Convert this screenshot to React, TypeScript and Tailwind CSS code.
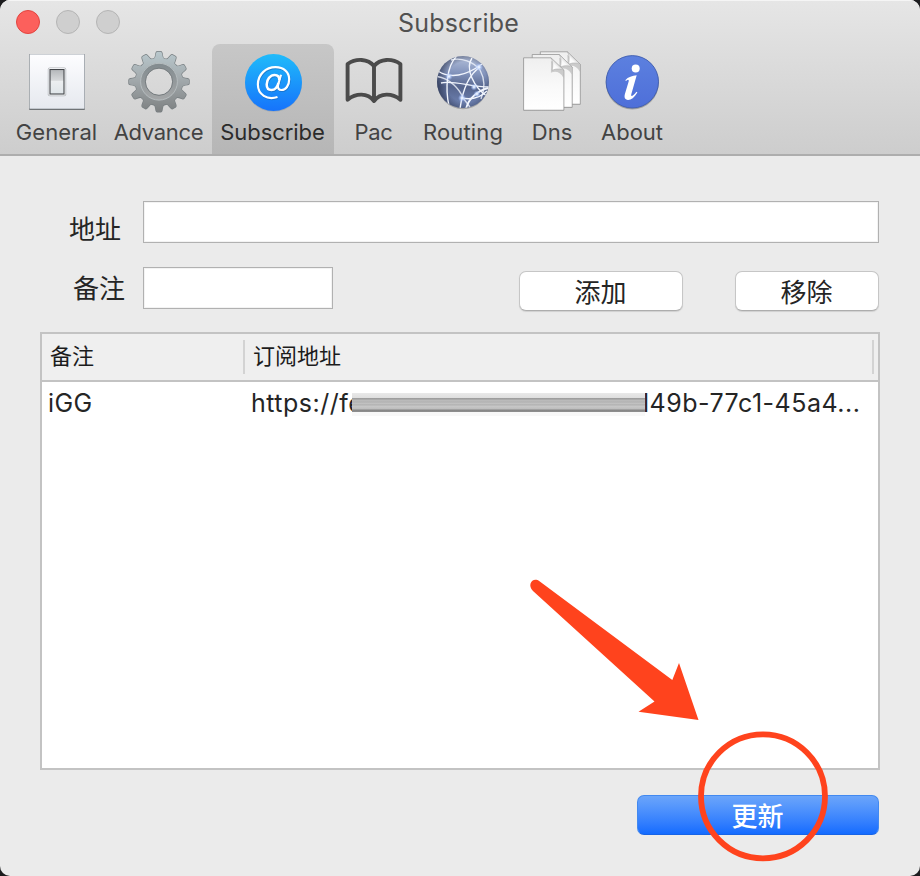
import React from "react";

const latin = "font-['Inter','Noto_Sans_CJK_SC',sans-serif]";

function GeneralIcon() {
  return (
    <svg viewBox="21 48 72 68" className="h-[68px] w-[72px]">
      <defs>
        <linearGradient id="plate" x1="0" y1="0" x2="0" y2="1">
          <stop offset="0" stopColor="#fdfdff" />
          <stop offset="1" stopColor="#e6e9ef" />
        </linearGradient>
        <linearGradient id="rocker" x1="0" y1="0" x2="0" y2="1">
          <stop offset="0" stopColor="#b4b7ba" />
          <stop offset="0.44" stopColor="#d6d8da" />
          <stop offset="0.48" stopColor="#eceef0" />
          <stop offset="1" stopColor="#dfe5e9" />
        </linearGradient>
      </defs>
      <rect x="29" y="54" width="56" height="56" rx="1" fill="#6f7376" />
      <rect x="29.2" y="54" width="55.6" height="55" rx="1" fill="#b9bec4" />
      <rect x="30" y="54.7" width="54" height="53.5" fill="url(#plate)" />
      <rect x="47.8" y="67.5" width="18.4" height="28.8" rx="2" fill="#b1b4b8" />
      <rect x="48.5" y="68" width="17" height="27.4" rx="1.5" fill="#f8f9fb" />
      <rect x="50" y="69.5" width="14" height="24.5" fill="url(#rocker)" stroke="#43464a" strokeWidth="1.1" />
    </svg>
  );
}

const teeth = [0, 30, 60, 90, 120, 150, 180, 210, 240, 270, 300, 330];

function GearIcon() {
  return (
    <svg viewBox="123 48 72 68" className="h-[68px] w-[72px]">
      <defs>
        <linearGradient id="gear" gradientUnits="userSpaceOnUse" x1="0" y1="51" x2="0" y2="113">
          <stop offset="0" stopColor="#b9c8cd" />
          <stop offset="0.45" stopColor="#a3aaad" />
          <stop offset="1" stopColor="#7c7f80" />
        </linearGradient>
        <linearGradient id="gearRing" gradientUnits="userSpaceOnUse" x1="0" y1="63" x2="0" y2="101">
          <stop offset="0" stopColor="#818a8e" />
          <stop offset="1" stopColor="#a6a8a9" />
        </linearGradient>
        <mask id="gearHole">
          <rect x="123" y="48" width="72" height="68" fill="#fff" />
          <circle cx="159" cy="81.700" r="13.6" fill="#000" />
        </mask>
        <mask id="gearTeeth">
          <g fill="#fff">
            <circle cx="159" cy="81.700" r="23.700" />
            {teeth.map((a) => (
              <path key={a} transform={`rotate(${a} 159 81.7)`} d="M153.500 60 Q155.500 58 156 53.500 Q156.300 51.700 157.400 51.700 H160.600 Q161.700 51.700 162 53.500 Q162.500 58 164.500 60Z" />
            ))}
          </g>
          <circle cx="159" cy="81.700" r="13.6" fill="#000" />
        </mask>
      </defs>
      <g mask="url(#gearHole)">
        <g fill="#787f82">
          {teeth.map((a) => (
            <path key={a} transform={`rotate(${a} 159 81.7)`} d="M152.900 60 Q154.900 58 155.400 53 Q155.800 51 157.200 51 H160.800 Q162.200 51 162.600 53 Q163.100 58 165.100 60Z" />
          ))}
          <circle cx="159" cy="81.700" r="24.300" />
        </g>
      </g>
      <rect x="123" y="48" width="72" height="68" fill="url(#gear)" mask="url(#gearTeeth)" />
      <circle cx="159" cy="81.700" r="16" fill="none" stroke="url(#gearRing)" strokeWidth="5" />
      <circle cx="159" cy="81.700" r="18.4" fill="none" stroke="#b8bec1" strokeWidth="0.9" />
      <circle cx="159" cy="81.700" r="13.6" fill="none" stroke="#767c7f" strokeWidth="1" />
    </svg>
  );
}

function AtIcon() {
  return (
    <svg viewBox="237 48 72 68" className="h-[68px] w-[72px]">
      <defs>
        <linearGradient id="at" x1="0" y1="0" x2="0" y2="1">
          <stop offset="0" stopColor="#20bbfa" />
          <stop offset="1" stopColor="#1673fb" />
        </linearGradient>
      </defs>
      <circle cx="273.5" cy="83.4" r="28.4" fill="#8e9ba8" opacity="0.6" />
      <circle cx="273.5" cy="82.5" r="28.5" fill="url(#at)" />
      {["#1866b8", "#fff"].map((ink, i) => (
        <g key={ink} transform={i === 0 ? "translate(0.500 1)" : undefined} opacity={i === 0 ? 0.6 : 1} fill="none" stroke={ink} strokeWidth="2.200" strokeLinecap="butt">
          <path d="M277.500 97 C267 100.500 257.900 94.500 257.900 84.500 C257.900 74.500 265.800 67.200 275.500 67.200 C283.800 67.200 289.200 72.300 289.200 79.200 C289.200 85.600 285.700 90 281.600 90 C278.500 90 277.400 88 278.200 84.500 L281 74.800" />
          <path d="M279.300 80 C279.300 76.800 277.300 75 274.700 75 C270.200 75 266.700 79.600 266.700 84.500 C266.700 87.800 268.500 90 271.400 90 C275.200 90 277.500 86.800 278.400 83" strokeWidth="2.500" />
        </g>
      ))}
    </svg>
  );
}

function BookIcon() {
  return (
    <svg viewBox="338 48 72 68" className="h-[68px] w-[72px]">
      <path
        d="M374 66 C368 58.5 356 58 347.6 64 V99.7 C356 93 367.5 92.5 374 101 C380.500 92.500 392 93 400.400 99.700 V64 C392 58 380 58.500 374 66 V100"
        fill="none"
        stroke="#4b4b4b"
        strokeWidth="3.900"
        strokeLinejoin="round"
        strokeLinecap="round"
      />
    </svg>
  );
}

function RoutingIcon() {
  return (
    <svg viewBox="427 48 72 68" className="h-[68px] w-[72px]">
      <defs>
        <linearGradient id="globe" x1="0.55" y1="0" x2="0.5" y2="1">
          <stop offset="0" stopColor="#b4c0da" />
          <stop offset="0.32" stopColor="#8495bd" />
          <stop offset="0.6" stopColor="#55648c" />
          <stop offset="1" stopColor="#7286b7" />
        </linearGradient>
        <radialGradient id="globeEdge" cx="0.56" cy="0.5" r="0.56">
          <stop offset="0.7" stopColor="#27304b" stopOpacity="0" />
          <stop offset="1" stopColor="#27304b" stopOpacity="0.65" />
        </radialGradient>
        <radialGradient id="glow">
          <stop offset="0" stopColor="#fff" />
          <stop offset="0.35" stopColor="#cfe0ff" stopOpacity="0.85" />
          <stop offset="1" stopColor="#8fb0ff" stopOpacity="0" />
        </radialGradient>
        <clipPath id="globeClip">
          <circle cx="463" cy="82" r="26" />
        </clipPath>
      </defs>
      <ellipse cx="463" cy="83.500" rx="25.500" ry="25.800" fill="#777" opacity="0.5" />
      <circle cx="463" cy="82" r="26" fill="url(#globe)" />
      <circle cx="463" cy="82" r="26" fill="url(#globeEdge)" />
      <g clipPath="url(#globeClip)" fill="none" stroke="#f1f5fd" strokeWidth="1.400">
        <path d="M456 57 C447 66 445 88 449 106" />
        <path d="M451 60 C461 57 474 62 480 70 C485 79 485 89 481 99" strokeOpacity="0.8" />
        <path d="M438 71 C450 79 466 76 482 64" />
        <path d="M437 76.500 C450 78 460 90 463 98 C466 102 469 105 471 109" strokeOpacity="0.8" />
        <path d="M441 83 C453 80 471 87 489 87" />
        <path d="M472 58 C465 68 473 87 488 97" />
        <path d="M480 67 C467 76 462 94 460 109" />
        <path d="M489 88 C478 90 468 99 466 109" strokeWidth="1.800" />
        <path d="M462 98 C472 100 481 97 487 91" />
      </g>
      <circle cx="449" cy="76.500" r="3.800" fill="url(#glow)" />
      <circle cx="479" cy="67" r="4" fill="url(#glow)" />
      <circle cx="474" cy="87" r="3.500" fill="url(#glow)" />
      <circle cx="462" cy="98" r="4" fill="url(#glow)" />
      <circle cx="477" cy="94" r="3.500" fill="url(#glow)" />
    </svg>
  );
}

function Page({ x, y, w, h }: { x: number; y: number; w: number; h: number }) {
  return (
    <g transform={`translate(${x} ${y})`}>
      <path d={`M0 0 H${w - 13} L${w} 12.500 V${h} H0Z`} fill="#8d8d8d" transform="translate(0 0.800)" opacity="0.5" />
      <path d={`M0 0 H${w - 13} L${w} 12.500 V${h} H0Z`} fill="url(#paper)" stroke="#8b8b8b" strokeWidth="0.700" />
      <g transform={`translate(${w - 40.5} 0)`}>
        <path d="M27.500 3 C28 8 27.500 12 27.500 15 C32 13 37 14 40 20 V13Z" fill="#999" opacity="0.45" />
        <path d="M27.500 0 C30 4 29.500 8 28.800 12.500 C33 10.500 37 11 40.500 12.500Z" fill="url(#curl)" stroke="#a3a3a3" strokeWidth="0.500" />
      </g>
    </g>
  );
}

function DnsIcon() {
  return (
    <svg viewBox="516 48 72 68" className="h-[68px] w-[72px]">
      <defs>
        <linearGradient id="paper" x1="0" y1="0" x2="0" y2="1">
          <stop offset="0" stopColor="#efefef" />
          <stop offset="0.600" stopColor="#fafafa" />
          <stop offset="1" stopColor="#fff" />
        </linearGradient>
        <linearGradient id="curl" x1="0" y1="1" x2="0.700" y2="0.300">
          <stop offset="0" stopColor="#fff" />
          <stop offset="0.500" stopColor="#fafafa" />
          <stop offset="1" stopColor="#bdbdbd" />
        </linearGradient>
      </defs>
      <Page x={540.3} y={51.800} w={40} h={52.4} />
      <Page x={532.2} y={54.5} w={40} h={52.8} />
      <Page x={523.6} y={57.8} w={40.3} h={52.4} />
    </svg>
  );
}

function AboutIcon() {
  return (
    <svg viewBox="596 48 72 68" className="h-[68px] w-[72px]">
      <defs>
        <linearGradient id="about" x1="0" y1="0" x2="0" y2="1">
          <stop offset="0" stopColor="#5c80df" />
          <stop offset="1" stopColor="#4e6fd9" />
        </linearGradient>
      </defs>
      <circle cx="632.300" cy="83" r="26.500" fill="#777" opacity="0.550" />
      <circle cx="632.300" cy="81.800" r="26.200" fill="url(#about)" stroke="#3e5cae" strokeWidth="0.900" />
      <circle cx="635.700" cy="68.500" r="4" fill="#fff" />
      <path
        d="M625.300 80.300 C628 77 632.500 75.600 636.700 75.300 L631.300 94.300 C630.700 96.800 632.300 96.800 636.500 91.700 L637.400 92.400 C634.300 97.500 631 100 628 99.900 C624.800 99.800 624 97.500 624.900 94.100 L628.600 81.800 C629.200 79.700 628.300 78.900 626 80.900Z"
        fill="#fff"
      />
    </svg>
  );
}

const tabs = [
  { label: "General", Icon: GeneralIcon, box: "w-[98px]", text: "tracking-[0.05px] pr-px" },
  { label: "Advance", Icon: GearIcon, box: "w-[106px]", text: "tracking-[-0.3px] pr-px" },
  { label: "Subscribe", Icon: AtIcon, box: "w-[122px]", text: "tracking-[-0.05px] pr-px" },
  { label: "Pac", Icon: BookIcon, box: "w-[80px]", text: "tracking-[-0.3px] pr-px" },
  { label: "Routing", Icon: RoutingIcon, box: "w-[98px]", text: "tracking-[0.15px]" },
  { label: "Dns", Icon: DnsIcon, box: "w-[80px]", text: "tracking-[0px]" },
  { label: "About", Icon: AboutIcon, box: "w-[80px]", text: "tracking-[-0.05px]" },
];

function Header() {
  return (
    <header className="h-[156px] shrink-0 border-b-2 border-[#adadad] bg-linear-to-b from-[#e6e6e6] to-[#cdcdcd] shadow-[inset_0_1px_0_#f5f5f5]">
      <div className="grid h-11 grid-cols-3 items-center px-4">
        <div className="flex gap-4">
          <span className="size-6 rounded-full border border-[#e2443f] bg-[#fc605c]" />
          <span className="size-6 rounded-full border border-[#b4b4b4] bg-[#cfcfcf]" />
          <span className="size-6 rounded-full border border-[#b4b4b4] bg-[#cfcfcf]" />
        </div>
        <h1 className="pt-0.5 pr-[3px] text-center text-[25px] leading-[42px] tracking-[0.2px] text-[#515151]">Subscribe</h1>
      </div>
      <nav className="flex h-[110px] pl-2">
        {tabs.map(({ label, Icon, box, text }) => {
          const active = label === "Subscribe";
          return (
            <button
              key={label}
              className={`flex shrink-0 flex-col items-center rounded-t-lg pt-1 ${box} ${active ? "bg-linear-to-b from-[#c7c7c7] to-[#b6b6b6] text-[#2b2b2b]" : "text-[#434343]"}`}
            >
              <Icon />
              <span className={`text-[22px] leading-[32px] whitespace-nowrap ${text}`}>{label}</span>
            </button>
          );
        })}
      </nav>
    </header>
  );
}

export default function App() {
  return (
    <div className={`h-[876px] w-[920px] overflow-hidden bg-[#1c1c1e] ${latin}`}>
      <div className="flex h-full flex-col overflow-hidden rounded-[10px] bg-[#ebebeb] text-[#252525]">
        <Header />
        <main className="flex flex-1 flex-col pt-[45px] pr-[40px] pl-[40px]">
          <div className="flex h-[42px] pr-px">
            <label className="w-[103px] pt-2.5 pl-[29px] text-[26px] leading-[38px]">地址</label>
            <input className="h-[42px] flex-1 border border-[#b1b1b1] bg-white shadow-[inset_0_0_0_1px_#f3f3f3] outline-none" />
          </div>
          <div className="mt-6 flex h-[42px] pr-px">
            <label className="w-[103px] pt-[3px] pl-[33px] text-[26px] leading-[38px]">备注</label>
            <input className="h-[42px] w-[190px] border border-[#b1b1b1] bg-white shadow-[inset_0_0_0_1px_#f3f3f3] outline-none" />
            <div className="ml-auto flex gap-[52px] pt-1">
              <button className="h-10 w-[164px] rounded-[7px] border border-[#c6c6c6] border-b-[#adadad] bg-white pt-0.5 pr-px text-[26px] leading-[38px] shadow-[0_1px_1px_#d0d0d0]">添加</button>
              <button className="h-10 w-[144px] rounded-[7px] border border-[#c6c6c6] border-b-[#adadad] bg-white pt-0.5 pr-px text-[26px] leading-[38px] shadow-[0_1px_1px_#d0d0d0]">移除</button>
            </div>
          </div>
          <section className="mt-[23px] flex h-[438px] flex-col border-2 border-[#c3c3c3] bg-white">
            <div className="flex h-12 shrink-0 items-center border-b-2 border-[#c3c3c3] bg-[#efefef] pr-1 text-[22px] text-[#1c1c1c]">
              <div className="flex h-[34px] w-[203px] items-center border-r-2 border-[#d3d3d3] pb-0.5 pl-2">备注</div>
              <div className="flex h-[34px] flex-1 items-center border-r-2 border-[#d3d3d3] pb-0.5 pl-2">订阅地址</div>
            </div>
            <div className="flex h-11 items-center text-[25px] whitespace-nowrap text-[#252525]">
              <div className="w-[209px] pl-1.5 tracking-[0.4px]">iGG</div>
              <div className="w-[101px] tracking-[0.5px]">https://fe</div>
              <div className="z-10 h-[23px] w-[293px] bg-[linear-gradient(180deg,#e9e9e9_0px,#dedede_5px,#999_5px,#a2a2a2_6px,#c2c2c2_8px,#a9a9a9_9px,#c6c6c6_10px,#b0b0b0_12px,#c8c8c8_13px,#bdbdbd_16px,#858585_17px,#909090_19px,#f8f8f8_19px)]" />
              <div className="-ml-0.5 tracking-[0.5px]">l49b-77c1-45a4...</div>
            </div>
          </section>
          <button className="mt-[25px] mr-px h-10 w-[242px] self-end rounded-[7px] border border-[#4289f0] border-b-[#1763e6] bg-linear-to-b from-[#6ba5fa] to-[#126bff] pt-0.5 pr-px text-[26px] leading-[38px] font-medium text-white">更新</button>
        </main>
      </div>
      <svg className="pointer-events-none absolute top-0 left-0 h-[876px] w-[920px]" viewBox="0 0 920 876">
        <path d="M539.500 581.300 L672.300 680 L679 663 L698.500 720 L638.500 711.700 L654.500 701.500 L533 591 C526.500 584.500 533 576.500 539.500 581.300Z" fill="#ff431d" />
        <circle cx="763" cy="796.300" r="62" fill="none" stroke="#ff431d" strokeWidth="5.800" />
      </svg>
    </div>
  );
}
